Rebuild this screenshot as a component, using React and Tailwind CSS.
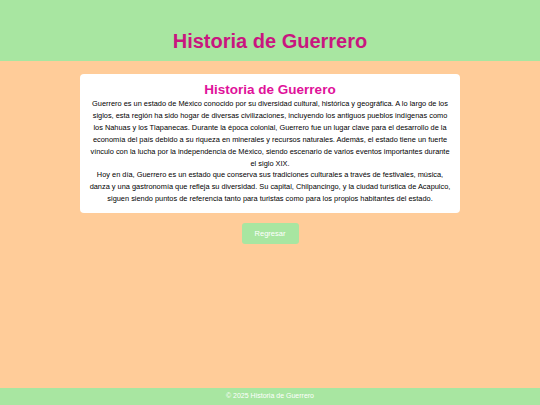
export default function App() {
  return (
    <div className="min-h-[405px] flex flex-col bg-[#ffcc99] font-['Liberation_Sans',Arial,sans-serif]">
      <header className="bg-[#a8e6a1] pt-[29px] pb-[8px] text-center">
        <h1 className="text-[20px] leading-[24px] font-bold text-[#c9157f]">Historia de Guerrero</h1>
      </header>

      <main className="flex-1 flex flex-col items-center pt-[13px]">
        <section className="w-[380px] bg-white rounded-[4px] px-[8px] pt-[8px] pb-[8px] text-center">
          <h2 className="text-[13.5px] leading-[16px] font-bold text-[#e0119a]">Historia de Guerrero</h2>
          <p className="text-[7.4px] leading-[11.9px] text-black">
            Guerrero es un estado de México conocido por su diversidad cultural, histórica y geográfica. A lo largo de los siglos, esta región ha sido hogar de diversas civilizaciones, incluyendo los antiguos pueblos indígenas como los Nahuas y los Tlapanecas. Durante la época colonial, Guerrero fue un lugar clave para el desarrollo de la economía del país debido a su riqueza en minerales y recursos naturales. Además, el estado tiene un fuerte vínculo con la lucha por la independencia de México, siendo escenario de varios eventos importantes durante el siglo XIX.
          </p>
          <p className="text-[7.4px] leading-[11.9px] text-black">
            Hoy en día, Guerrero es un estado que conserva sus tradiciones culturales a través de festivales, música, danza y una gastronomía que refleja su diversidad. Su capital, Chilpancingo, y la ciudad turística de Acapulco, siguen siendo puntos de referencia tanto para turistas como para los propios habitantes del estado.
          </p>
        </section>

        <button className="mt-[10px] w-[57px] h-[21px] rounded-[3px] bg-[#a8e6a1] text-white text-[7.5px]">
          Regresar
        </button>
      </main>

      <footer className="bg-[#a8e6a1] h-[17px] flex items-center justify-center text-white text-[7px]">
        © 2025 Historia de Guerrero
      </footer>
    </div>
  );
}
